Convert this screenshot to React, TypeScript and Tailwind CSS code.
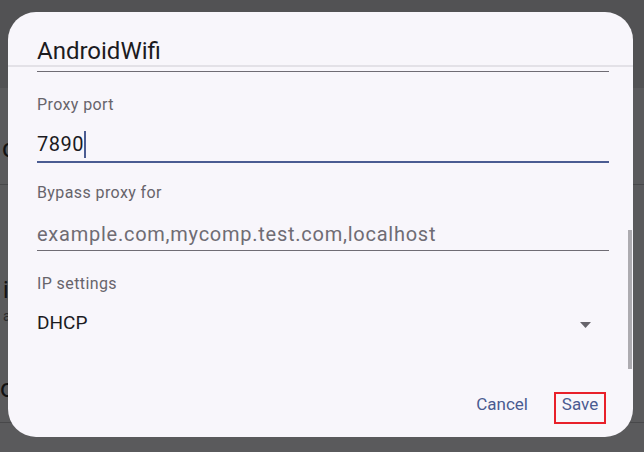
import React from "react";

function BackgroundPage() {
  // Wi-Fi settings list behind the scrim, mostly hidden by the dialog.
  return (
    <div className="flex h-[452px] w-[644px] flex-col bg-[#5a5a5c]">
      <div className="h-[88px] bg-[#525254]" />
      <div className="h-[97px] border-b border-[#48484a] pl-[2px] pt-[45px] text-[26px] leading-[30px] text-[#111112]">
        co
      </div>
      <div className="flex h-[150px] flex-col pl-[3px] pt-[93px]">
        <span className="text-[23px] leading-[26px] text-[#111112]">ip</span>
        <span className="mt-[3px] text-[14px] leading-[18px] text-[#2a2a2c]">a</span>
      </div>
      <div className="h-[88px] border-b border-[#48484a] pt-[38px] text-[26px] leading-[30px] text-[#111112]">
        o
      </div>
    </div>
  );
}

function Label({ children }: { children: React.ReactNode }) {
  return (
    <div className="text-[16px] leading-[20px] tracking-[0.4px] text-[#67646b]">{children}</div>
  );
}

function ProxyDialog() {
  return (
    <div className="absolute left-[8px] top-[12px] flex h-[425px] w-[625px] flex-col overflow-hidden rounded-[28px] bg-[#f8f6fb]">
      <div className="relative h-[358px] overflow-hidden pl-[29px] pr-[24px] pt-[25px]">
        {/* SSID field, scrolled mostly out of view */}
        <div className="text-[24px] leading-[28px] text-[#1c1b1f]">AndroidWifi</div>
        <div className="-ml-[29px] -mr-[24px] h-[2px] bg-[#e3e1e7]" />
        <div className="mt-[4px] h-px bg-[#6f6c74]" />

        <div className="mt-[23px]">
          <Label>Proxy port</Label>
        </div>
        <div className="mt-[15px] flex h-[28px] items-center text-[20px] leading-[28px] tracking-[0.5px] text-[#1c1b1f]">
          <span>7890</span>
          <span className="h-[27px] w-[2px] bg-[#4b5c92]" />
        </div>
        <div className="mt-[3px] h-[2px] bg-[#4b5c92]" />

        <div className="mt-[20px]">
          <Label>Bypass proxy for</Label>
        </div>
        <div className="mt-[17px] text-[20px] leading-[28px] tracking-[0.75px] text-[#6f6c74]">
          example.com,mycomp.test.com,localhost
        </div>
        <div className="mt-[2px] h-px bg-[#6f6c74]" />

        <div className="mt-[23px]">
          <Label>IP settings</Label>
        </div>
        <div className="mt-[15px] flex h-[28px] items-center justify-between pr-[18px]">
          <span className="text-[19px] leading-[28px] text-[#1c1b1f]">DHCP</span>
          <svg width="11" height="6" viewBox="0 0 11 6" className="mt-[3px]">
            <path d="M0 0h11L5.5 6z" fill="#67646b" />
          </svg>
        </div>

        {/* scrollbar thumb */}
        <div className="absolute right-px top-[218px] h-[139px] w-[4px] bg-[#adabb0]" />
      </div>

      <div className="mt-[22px] flex h-[32px] items-center justify-end gap-[18px] pr-[27px] text-[17px] text-[#4a5b91]">
        <span className="flex h-[32px] items-center px-[8px] pb-[6px]">Cancel</span>
        <span className="flex h-[32px] w-[52px] items-center justify-center border-2 border-[#e8202a] pb-[6px]">
          Save
        </span>
      </div>
    </div>
  );
}

export default function App() {
  return (
    <div className="relative h-[452px] w-[644px] overflow-hidden font-[family-name:Roboto,sans-serif]">
      <BackgroundPage />
      <ProxyDialog />
    </div>
  );
}
